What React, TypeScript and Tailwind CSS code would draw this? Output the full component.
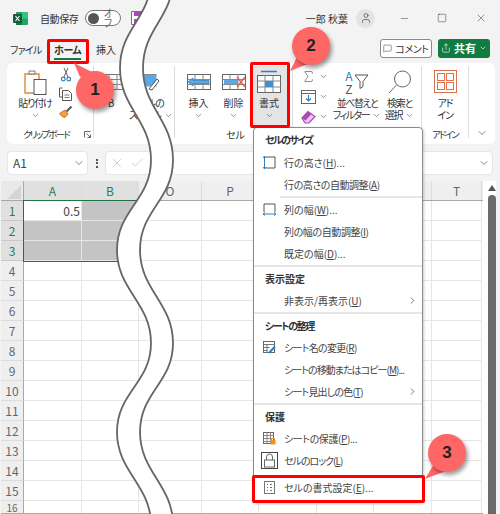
import React from "react";
import { ChevronDown, ChevronRight, Minus, Square, X, Check, User, MessageSquare, Share, Sigma } from "lucide-react";

// Q, R, S sit behind the menu, so their headers are left out
const COLS = [
  { name: "A", w: 58, sel: true },
  { name: "B", w: 57, sel: true },
  { name: "O", w: 63, sel: false },
  { name: "P", w: 57, sel: false },
  { name: "", w: 58, sel: false },
  { name: "", w: 57, sel: false },
  { name: "", w: 58, sel: false },
  { name: "T", w: 50, sel: false },
];

const ROWS = [1, 2, 3, 4, 5, 6, 7, 8, 9, 10, 11, 12, 13, 14, 15];

const Chev = ({ className = "" }: { className?: string }) => (
  <ChevronDown size={9} strokeWidth={1.5} className={"shrink-0 text-[#444] " + className} />
);

// table icon used by the cell group
const TableIcon = ({ children }: { children?: React.ReactNode }) => (
  <svg width="24" height="20" viewBox="0 0 24 20" fill="none">
    <rect x="0.5" y="2.5" width="23" height="15" fill="#fff" stroke="#666" />
    <path d="M8 2.5v15M16 2.5v15M0.5 7.5h23M0.5 12.5h23" stroke="#888" />
    {children}
  </svg>
);

const RibbonButton = ({
  w,
  icon,
  lines,
  chev = false,
  t = "",
}: {
  w: number;
  icon: React.ReactNode;
  lines: string[];
  chev?: boolean;
  t?: string;
}) => (
  <div className="flex flex-col items-center" style={{ width: w }}>
    <div className="h-[31px] flex items-center justify-center">{icon}</div>
    {lines.map((l, i) => (
      <div key={l} className={"h-[12px] leading-[12px] whitespace-nowrap flex items-center gap-[3px] " + t}>
        {l}
        {chev && i === lines.length - 1 && lines.length > 1 && <Chev />}
      </div>
    ))}
    {chev && lines.length === 1 && (
      <div className="h-[12px] flex items-center">
        <Chev />
      </div>
    )}
  </div>
);

const MenuHead = ({ children, h = 22, t = "" }: { children: React.ReactNode; h?: number; t?: string }) => (
  <div className={"flex items-center pl-[11px] font-bold text-[#333] " + t} style={{ height: h }}>
    {children}
  </div>
);

const MenuItem = ({
  icon,
  label,
  arrow = false,
  t = "",
}: {
  icon?: React.ReactNode;
  label: React.ReactNode;
  arrow?: boolean;
  t?: string;
}) => (
  <div className="flex items-center h-[22px] text-[#444]">
    <div className="w-[30px] flex justify-center shrink-0">{icon}</div>
    <div className={"flex-1 whitespace-nowrap " + t}>{label}</div>
    {arrow && <ChevronRight size={11} strokeWidth={1.5} className="mr-[4px] text-[#444]" />}
  </div>
);

const Sep = ({ inset = false }: { inset?: boolean }) => (
  <div className="h-[3px] flex items-center">
    <div className={"h-[2px] bg-[#e6e6e6] flex-1 " + (inset ? "ml-[26px]" : "")} />
  </div>
);

const Badge = ({
  n,
  className,
  tail,
}: {
  n: string;
  className: string;
  tail: string;
}) => (
  <div className={"absolute w-[38px] h-[38px] " + className}>
    <svg className="absolute -left-[30px] -top-[30px] overflow-visible" width="98" height="98" viewBox="-30 -30 98 98" fill="none">
      <path d={tail} fill="#ff6666" />
    </svg>
    <div className="absolute inset-0 rounded-full bg-[#ff6666] shadow-[2px_3px_4px_rgba(0,0,0,0.4)] flex items-center justify-center font-['Liberation_Sans',sans-serif] font-bold text-[17px] text-[#222]">
      {n}
    </div>
  </div>
);

export default function App() {
  const waveLeft =
    "M151 -22 C151 18 120 28 120 68 C120 108 151 120 151 160 C151 200 117 210 117 250 C117 290 151 303 151 343 C151 383 117 392 117 432 C117 472 151 485 151 525";
  const waveRight =
    "M173 -22 C173 18 143 28 143 68 C143 108 173 120 173 160 C173 200 140 210 140 250 C140 290 173 303 173 343 C173 383 140 392 140 432 C140 472 173 485 173 525";
  const waveFill =
    waveLeft +
    " L173 525 C173 485 140 472 140 432 C140 392 173 383 173 343 C173 303 140 290 140 250 C140 210 173 200 173 160 C173 120 143 108 143 68 C143 28 173 18 173 -22 Z";

  return (
    <div className="relative w-[500px] h-[514px] overflow-hidden bg-[#f3f3f3] font-['Noto_Sans_CJK_JP','Liberation_Sans',sans-serif] [font-feature-settings:'palt'] text-[10px] text-[#333]">
      {/* タイトルバー */}
      <div className="h-[36px] flex items-center pr-[9px]">
        <svg width="15" height="15" viewBox="0 0 15 15" className="ml-[13px]">
          <rect x="3" y="1" width="12" height="13" rx="1" fill="#21a366" />
          <rect x="9" y="1" width="6" height="6.5" fill="#33c481" />
          <rect x="3" y="7.5" width="6" height="6.5" fill="#107c41" />
          <rect x="0" y="3" width="9" height="9" rx="1" fill="#185c37" />
          <path d="M2.5 5l4 5M6.5 5l-4 5" stroke="#fff" strokeWidth="1.1" />
        </svg>
        <span className="ml-[12px] w-[38px] whitespace-nowrap tracking-[-0.4px]">自動保存</span>
        <div className="ml-[7px] w-[36px] h-[16px] rounded-full border border-[#777] bg-white flex items-center pl-[2px] gap-[5px]">
          <div className="w-[11px] h-[11px] rounded-full bg-[#555]" />
          <span className="text-[#666] leading-none tracking-[-0.5px]">オフ</span>
        </div>
        <svg width="14" height="14" viewBox="0 0 14 14" className="ml-[10px]">
          <path d="M0.5 0.5h11l2 2v11h-13z" fill="#fff" stroke="#a94bb5" />
          <rect x="3" y="1" width="7" height="4" fill="#a94bb5" />
          <rect x="3" y="8" width="8" height="5" fill="#a94bb5" />
        </svg>
        <div className="flex-1" />
        <span className="whitespace-nowrap">一郎 秋葉</span>
        <div className="ml-[8px] w-[19px] h-[19px] rounded-full bg-[#e3e3e3] flex items-center justify-center">
          <User size={12} strokeWidth={1.3} className="text-[#444]" />
        </div>
        <div className="ml-[19px] w-[20px] flex justify-center">
          <Minus size={11} strokeWidth={1} className="text-[#333]" />
        </div>
        <div className="ml-[18px] w-[20px] flex justify-center">
          <Square size={10} strokeWidth={1.2} className="text-[#333]" />
        </div>
        <div className="ml-[19px] w-[20px] flex justify-center">
          <X size={12} strokeWidth={1} className="text-[#333]" />
        </div>
      </div>

      {/* タブ */}
      <div className="h-[27px] flex items-center pr-[10px]">
        <span className="ml-[10px] w-[44px] whitespace-nowrap tracking-[-0.8px]">ファイル</span>
        <span className="w-[34px] relative font-bold whitespace-nowrap tracking-[-0.4px]">
          ホーム
          <span className="absolute left-0 right-[7px] -bottom-[3px] h-[2px] bg-[#217346]" />
        </span>
        <span className="ml-[8px] whitespace-nowrap">挿入</span>
        <div className="flex-1" />
        <div className="w-[52px] h-[19px] border border-[#8a8a8a] rounded-[3px] bg-white flex items-center justify-center gap-[3px] mb-[3px] whitespace-nowrap tracking-[-0.4px]">
          <MessageSquare size={9} strokeWidth={1.3} />
          コメント
        </div>
        <div className="ml-[6px] w-[52px] h-[19px] rounded-[3px] bg-[#107c41] text-white flex items-center justify-center gap-[3px] font-bold mb-[3px] whitespace-nowrap text-[11px]">
          <Share size={10} strokeWidth={1.5} />
          共有
          <ChevronDown size={8} strokeWidth={2} />
        </div>
      </div>

      {/* リボン */}
      <div className="ml-[7px] w-[488px] h-[81px] bg-white rounded-[6px] flex pt-[3px] relative">
        {/* クリップボード */}
        <div className="w-[87px] shrink-0 border-r border-[#dcdcdc] mb-[6px] flex flex-col">
          <div className="flex h-[55px]">
            <div className="ml-[7px]">
              <RibbonButton
                w={42}
                chev
                t="tracking-[-1.2px]"
                lines={["貼り付け"]}
                icon={
                  <svg width="24" height="26" viewBox="0 0 24 26" fill="none">
                    <path d="M2 5h14v19H2z" fill="#fff" stroke="#d98a3c" strokeWidth="1.4" />
                    <path d="M6 5V2h6v3z" fill="#fff" stroke="#777" />
                    <rect x="11" y="10.5" width="12" height="15" fill="#fff" stroke="#555" />
                  </svg>
                }
              />
            </div>
            <div className="w-[19px] flex flex-col items-center">
              <div className="h-[20px] flex items-center">
                <svg width="10" height="14" viewBox="0 0 10 14" fill="none">
                  <path d="M3 0l4 9M7 0L3 9" stroke="#666" />
                  <circle cx="2.3" cy="11" r="1.8" stroke="#2e7fc2" strokeWidth="1.2" />
                  <circle cx="7.7" cy="11" r="1.8" stroke="#2e7fc2" strokeWidth="1.2" />
                </svg>
              </div>
              <div className="h-[21px] flex items-center">
                <svg width="13" height="14" viewBox="0 0 13 14" fill="none">
                  <path d="M3.5 1h-3v9h3" stroke="#555" />
                  <path d="M3.5 3.5h6l3 3v7h-9z" fill="#fff" stroke="#555" />
                  <path d="M5.5 8h5M5.5 10.5h5" stroke="#777" />
                </svg>
              </div>
              <div className="h-[20px] flex items-center">
                <svg width="14" height="13" viewBox="0 0 14 13" fill="none">
                  <path d="M0.5 8.5L6 5l3 4-3 3.5-3-1z" fill="#f0a040" stroke="#c9772a" />
                  <path d="M7.5 6.5l5-5" stroke="#555" strokeWidth="2" />
                </svg>
              </div>
            </div>
          </div>
          <div className="mt-[6px] h-[14px] flex items-center relative pl-[16px] whitespace-nowrap text-[9.5px] tracking-[-1.8px]">
            クリップボード
            <svg width="7" height="7" viewBox="0 0 7 7" fill="none" className="absolute right-[2px] top-[4px]">
              <path d="M0.5 6.5v-6h6M2.5 2.5l4 4M6.5 3.5v3h-3" stroke="#666" />
            </svg>
          </div>
        </div>

        {/* スタイル */}
        <div className="w-[81px] shrink-0 border-r border-[#dcdcdc] mb-[6px] flex">
          <RibbonButton
            w={34}
            lines={["B"]}
            icon={
              <svg width="26" height="20" viewBox="0 0 26 20" fill="none" className="ml-[4px]">
                <rect x="0.5" y="2.5" width="25" height="15" fill="#fff" stroke="#777" />
                <path d="M0.5 7.5h25M0.5 12.5h25M9 2.5v15M17 2.5v15" stroke="#888" />
              </svg>
            }
          />
          <div className="ml-[2px]">
            <RibbonButton
              w={42}
              chev
              t="tracking-[-1px]"
              lines={["セルの", "スタイル"]}
              icon={
                <svg width="22" height="20" viewBox="0 0 22 20" fill="none">
                  <rect x="0.5" y="2.5" width="16" height="12" fill="#5aa9e6" />
                  <path d="M0.5 2.5h16" stroke="#888" />
                  <path d="M9 17l8-10 2 2-7 9z" fill="#fff" stroke="#555" />
                </svg>
              }
            />
          </div>
        </div>

        {/* セル */}
        <div className="w-[118px] shrink-0 mb-[6px] flex flex-col border-r border-[#dcdcdc]">
          <div className="flex pl-[6px] h-[55px]">
            <RibbonButton
              w={35}
              chev
              lines={["挿入"]}
              icon={
                <TableIcon>
                  <path d="M1 10l5-4v2.5h16v3H6V14z" fill="#5aa9e6" stroke="#2e7fc2" strokeWidth="0.8" />
                </TableIcon>
              }
            />
            <RibbonButton
              w={35}
              chev
              lines={["削除"]}
              icon={
                <TableIcon>
                  <rect x="2" y="8" width="14" height="4" fill="#5aa9e6" />
                  <path d="M15 5l8 10M23 5l-8 10" stroke="#e0604a" strokeWidth="1.4" />
                </TableIcon>
              }
            />
            <div className="w-[36px] h-[60px] bg-[#e4e4e4] rounded-[2px]">
              <RibbonButton
                w={36}
                chev
                lines={["書式"]}
                icon={
                  <svg width="24" height="24" viewBox="0 0 24 24" fill="none">
                    <path d="M4 1.5h16" stroke="#2e7fc2" strokeWidth="1.5" />
                    <rect x="0.5" y="5.5" width="23" height="17" fill="#fff" stroke="#666" />
                    <path d="M8 5.5v17M16 5.5v17M0.5 11h23M0.5 17h23" stroke="#888" />
                    <rect x="8" y="11" width="8" height="6" fill="#3d8fd6" />
                  </svg>
                }
              />
            </div>
          </div>
          <div className="mt-[6px] h-[14px] flex items-center pl-[51px]">セル</div>
        </div>

        {/* 編集 */}
        <div className="w-[129px] shrink-0 mb-[6px] border-r border-[#dcdcdc] flex">
          <div className="w-[42px] flex flex-col items-start pl-[8px] pt-[2px] gap-[3px]">
            <div className="h-[17px] flex items-center gap-[3px]">
              <Sigma size={15} strokeWidth={1.2} className="text-[#666]" />
              <Chev />
            </div>
            <div className="h-[17px] flex items-center gap-[3px]">
              <svg width="15" height="14" viewBox="0 0 15 14" fill="none">
                <rect x="0.5" y="0.5" width="14" height="13" stroke="#666" />
                <path d="M0.5 3.5h14" stroke="#666" />
                <path d="M7.5 5v6M5 8.5l2.5 2.5L10 8.5" stroke="#2e7fc2" strokeWidth="1.2" />
              </svg>
              <Chev />
            </div>
            <div className="h-[17px] flex items-center gap-[3px]">
              <svg width="15" height="14" viewBox="0 0 15 14" fill="none">
                <path d="M1 8l6-6.5 7 5-6 6.5H4z" fill="#e8c8ee" stroke="#a94bb5" strokeWidth="1.2" />
                <path d="M1 8l6-6.5 3.5 2.5L4.5 10.5z" fill="#a94bb5" />
              </svg>
              <Chev />
            </div>
          </div>
          <RibbonButton
            w={44}
            chev
            t="tracking-[-1.5px]"
            lines={["並べ替えと", "フィルター"]}
            icon={
              <div className="flex items-center gap-[1px]">
                <div className="flex flex-col text-[12px] leading-[13px]">
                  <span className="text-[#2e7fc2]">A</span>
                  <span className="text-[#555]">Z</span>
                </div>
                <svg width="15" height="15" viewBox="0 0 15 15" fill="none">
                  <path d="M1 1h13L9 7.5v5l-3 2V7.5z" fill="#fff" stroke="#555" />
                </svg>
              </div>
            }
          />
          <RibbonButton
            w={41}
            chev
            t="tracking-[-1.2px]"
            lines={["検索と", "選択"]}
            icon={
              <svg width="24" height="24" viewBox="0 0 24 24" fill="none">
                <circle cx="14.5" cy="9" r="8" fill="#fff" stroke="#666" />
                <path d="M8.5 15L1 23" stroke="#666" />
              </svg>
            }
          />
        </div>

        {/* アドイン */}
        <div className="w-[47px] shrink-0 mb-[6px] border-r border-[#dcdcdc] flex flex-col items-center">
          <RibbonButton
            w={46}
            t="tracking-[-1.2px]"
            lines={["アド", "イン"]}
            icon={
              <svg width="23" height="23" viewBox="0 0 23 23" fill="none">
                <rect x="0.5" y="0.5" width="22" height="22" fill="#fff" stroke="#e0714f" />
                <rect x="3.5" y="3.5" width="7" height="7" stroke="#e0714f" />
                <rect x="12.5" y="3.5" width="7" height="7" stroke="#e0714f" />
                <rect x="3.5" y="12.5" width="7" height="7" stroke="#e0714f" />
                <rect x="12.5" y="12.5" width="7" height="7" stroke="#e0714f" />
              </svg>
            }
          />
          <div className="mt-[6px] h-[14px] flex items-center whitespace-nowrap text-[9.5px] tracking-[-1.8px]">アドイン</div>
        </div>
        <div className="flex-1 flex items-end justify-center pb-[5px]">
          <ChevronDown size={12} strokeWidth={1.3} className="text-[#444]" />
        </div>
      </div>

      {/* 数式バー */}
      <div className="mt-[7px] ml-[7px] h-[24px] flex items-center">
        <div className="w-[81px] h-[24px] bg-white rounded-[4px] border border-[#e6e6e6] flex items-center pl-[5px] pr-[2px] text-[12px] text-[#444]">
          <span className="flex-1">A1</span>
          <ChevronDown size={12} strokeWidth={1.3} />
        </div>
        <div className="w-[17px] flex flex-col items-center gap-[1.5px]">
          <div className="w-[2px] h-[2px] bg-[#555]" />
          <div className="w-[2px] h-[2px] bg-[#555]" />
          <div className="w-[2px] h-[2px] bg-[#555]" />
        </div>
        <div className="w-[388px] h-[24px] bg-white rounded-[4px] border border-[#e6e6e6] flex items-center pl-[4px] pr-[2px] gap-[6px]">
          <X size={14} strokeWidth={1} className="text-[#aaa]" />
          <Check size={14} strokeWidth={1} className="text-[#aaa]" />
          <div className="flex-1" />
          <ChevronDown size={12} strokeWidth={1.3} className="text-[#444]" />
        </div>
      </div>

      {/* シート */}
      <div className="mt-[6px] flex">
        <div className="relative w-[482px] ml-[1px] shrink-0 bg-white">
          <div className="flex h-[20px] border-b border-[#a8a8a8] bg-[#efefef]">
            <div className="w-[23px] border-r border-[#a8a8a8] bg-[#e9e9e9] relative overflow-hidden">
              <svg width="14" height="14" viewBox="0 0 14 14" className="absolute right-[2px] bottom-[1px]">
                <path d="M14 0v14H0z" fill="#d4d4d4" />
              </svg>
            </div>
            {COLS.map((c, i) => (
              <div
                key={i}
                className={
                  "flex items-center justify-center border-r border-[#dcdcdc] text-[12px] " +
                  (c.sel ? "bg-[#e0e0e0] text-[#2c7a57]" : "text-[#666]")
                }
                style={{ width: c.w }}
              >
                {c.name}
              </div>
            ))}
          </div>
          {ROWS.map((r) => (
            <div key={r} className="flex h-[20px]">
              <div
                className={
                  "w-[23px] shrink-0 flex items-center justify-center border-r border-b text-[12px] " +
                  (r <= 3
                    ? "bg-[#e0e0e0] text-[#2c7a57] border-[#c8c8c8]"
                    : "bg-[#efefef] text-[#666] border-[#dcdcdc] border-r-[#a8a8a8]")
                }
              >
                {r}
              </div>
              {COLS.map((c, i) => (
                <div
                  key={i}
                  className={
                    "border-r border-b border-[#e6e6e6] flex items-center justify-end pr-[1px] text-[12px] text-[#444] " +
                    (c.sel && r <= 3 && !(r === 1 && c.name === "A") ? "bg-[#c4c4c4] border-[#b4b4b4]" : "")
                  }
                  style={{ width: c.w }}
                >
                  {r === 1 && c.name === "A" ? "0.5" : ""}
                </div>
              ))}
            </div>
          ))}
          {/* 下端の行番号: 16は画面下で切れる */}
          <div className="flex h-[13px] overflow-hidden border-b border-[#aaa]">
            <div className="w-[23px] shrink-0 bg-[#efefef] border-r border-[#a8a8a8] flex items-start justify-center text-[10px] leading-[13px] text-[#666]">
              16
            </div>
            {COLS.map((c, i) => (
              <div key={i} className="border-r border-[#e6e6e6]" style={{ width: c.w }} />
            ))}
          </div>
          {/* 選択枠 */}
          <div className="absolute left-[22px] top-[19px] w-[116px] h-[62px] border-[1.5px] border-[#217346]" />
        </div>

        {/* スクロールバー */}
        <div className="w-[13px] h-[333px] bg-white pl-[4px] flex flex-col items-center">
          <div className="h-[14px] flex items-center">
            <svg width="8" height="6" viewBox="0 0 8 6">
              <path d="M4 0l4 6H0z" fill="#555" />
            </svg>
          </div>
          <div className="w-[8px] flex-1 rounded-t-[4px] bg-[#6b6b6b]" />
        </div>
      </div>

      {/* 波線 */}
      <svg className="absolute left-0 top-0 pointer-events-none" width="500" height="514" viewBox="0 0 500 514" fill="none">
        <path d={waveFill} fill="#fff" />
        <path d={waveLeft} stroke="#666" strokeWidth="1.8" />
        <path d={waveRight} stroke="#666" strokeWidth="1.8" />
      </svg>

      {/* 書式メニュー */}
      <div className="absolute left-[253px] top-[127px] w-[170px] h-[376px] bg-white border border-[#8c8c8c] rounded-[4px] shadow-[1px_1px_3px_rgba(0,0,0,0.2)]">
        <MenuHead h={23} t="tracking-[-1.6px]">セルのサイズ</MenuHead>
        <MenuItem
          icon={
            <svg width="13" height="13" viewBox="0 0 13 13" fill="none">
              <path d="M3 1h9v11H3" stroke="#555" />
              <path d="M1.5 0v13M0 2l1.5-2L3 2M0 11l1.5 2L3 11" stroke="#2e7fc2" />
            </svg>
          }
          label={<>行の高さ(<u>H</u>)...</>}
        />
        <MenuItem t="tracking-[-0.45px]" label={<>行の高さの自動調整(<u>A</u>)</>} />
        <Sep inset />
        <MenuItem
          icon={
            <svg width="13" height="13" viewBox="0 0 13 13" fill="none">
              <path d="M1 9V1h11v8" stroke="#555" />
              <path d="M0 11h13M2 9.5L0 11l2 1.5M11 9.5l2 1.5-2 1.5" stroke="#2e7fc2" />
            </svg>
          }
          label={<>列の幅(<u>W</u>)...</>}
        />
        <MenuItem t="tracking-[-0.4px]" label={<>列の幅の自動調整(<u>I</u>)</>} />
        <MenuItem label={<>既定の幅(<u>D</u>)...</>} />
        <Sep />
        <MenuHead>表示設定</MenuHead>
        <MenuItem label={<>非表示/再表示(<u>U</u>)</>} arrow />
        <Sep />
        <MenuHead t="tracking-[-1.4px]">シートの整理</MenuHead>
        <MenuItem
          t="tracking-[-0.7px]"
          icon={
            <svg width="13" height="13" viewBox="0 0 13 13" fill="none">
              <rect x="0.5" y="0.5" width="11" height="11" stroke="#666" />
              <path d="M0.5 3.5h11M0.5 6.5h6M0.5 9.5h4M4 3.5v8" stroke="#777" />
              <path d="M6 12l6-6.5" stroke="#2e7fc2" strokeWidth="2" />
            </svg>
          }
          label={<>シート名の変更(<u>R</u>)</>}
        />
        <MenuItem t="tracking-[-0.95px]" label={<>シートの移動またはコピー(<u>M</u>)...</>} />
        <MenuItem t="tracking-[-0.8px]" label={<>シート見出しの色(<u>T</u>)</>} arrow />
        <Sep />
        <MenuHead>保護</MenuHead>
        <MenuItem
          t="tracking-[-0.4px]"
          icon={
            <svg width="13" height="13" viewBox="0 0 13 13" fill="none">
              <rect x="0.5" y="0.5" width="10" height="11" fill="#fff" stroke="#666" />
              <path d="M0.5 3.5h10M0.5 6.5h10M0.5 9.5h10M4 0.5v11M7.5 0.5v11" stroke="#888" />
              <rect x="7.5" y="8" width="5" height="4.5" fill="#e8962e" />
              <path d="M8.5 8V6.5h3V8" stroke="#e8962e" />
            </svg>
          }
          label={<>シートの保護(<u>P</u>)...</>}
        />
        <MenuItem
          t="tracking-[-1px]"
          icon={
            <svg width="17" height="17" viewBox="0 0 17 17" fill="none">
              <rect x="0.5" y="0.5" width="16" height="16" stroke="#444" />
              <rect x="3.5" y="8" width="10" height="7" stroke="#666" />
              <path d="M5.5 8V5a3 3 0 016 0v3" stroke="#666" />
            </svg>
          }
          label={<>セルのロック(<u>L</u>)</>}
        />
        <div className="mt-[5px]">
          <MenuItem
            icon={
              <svg width="11" height="13" viewBox="0 0 11 13" fill="none">
                <rect x="0.5" y="0.5" width="10" height="12" stroke="#777" />
                <path d="M3 3.5h1M3 6.5h1M3 9.5h1M6 3.5h2M6 6.5h2M6 9.5h2" stroke="#777" />
              </svg>
            }
            label={<>セルの書式設定(<u>E</u>)...</>}
          />
        </div>
      </div>

      {/* 赤枠 */}
      <div className="absolute left-[47px] top-[39px] w-[42px] h-[25px] border-[3px] border-[#ff0000] rounded-[2px]" />
      <div className="absolute left-[250px] top-[62px] w-[40px] h-[66px] border-[3px] border-[#ff0000] rounded-[2px]" />
      <div className="absolute left-[252px] top-[475px] w-[173px] h-[28px] border-[3px] border-[#ff0000] rounded-[2px]" />

      {/* 番号 */}
      <Badge n="1" className="left-[76px] top-[71px]" tail="M4 6L-2 -8L18 2Z" />
      <Badge n="2" className="left-[292px] top-[27px]" tail="M5 30L-2 44L18 36Z" />
      <Badge n="3" className="left-[428px] top-[434px]" tail="M6 30L-3 45L18 37Z" />
    </div>
  );
}
